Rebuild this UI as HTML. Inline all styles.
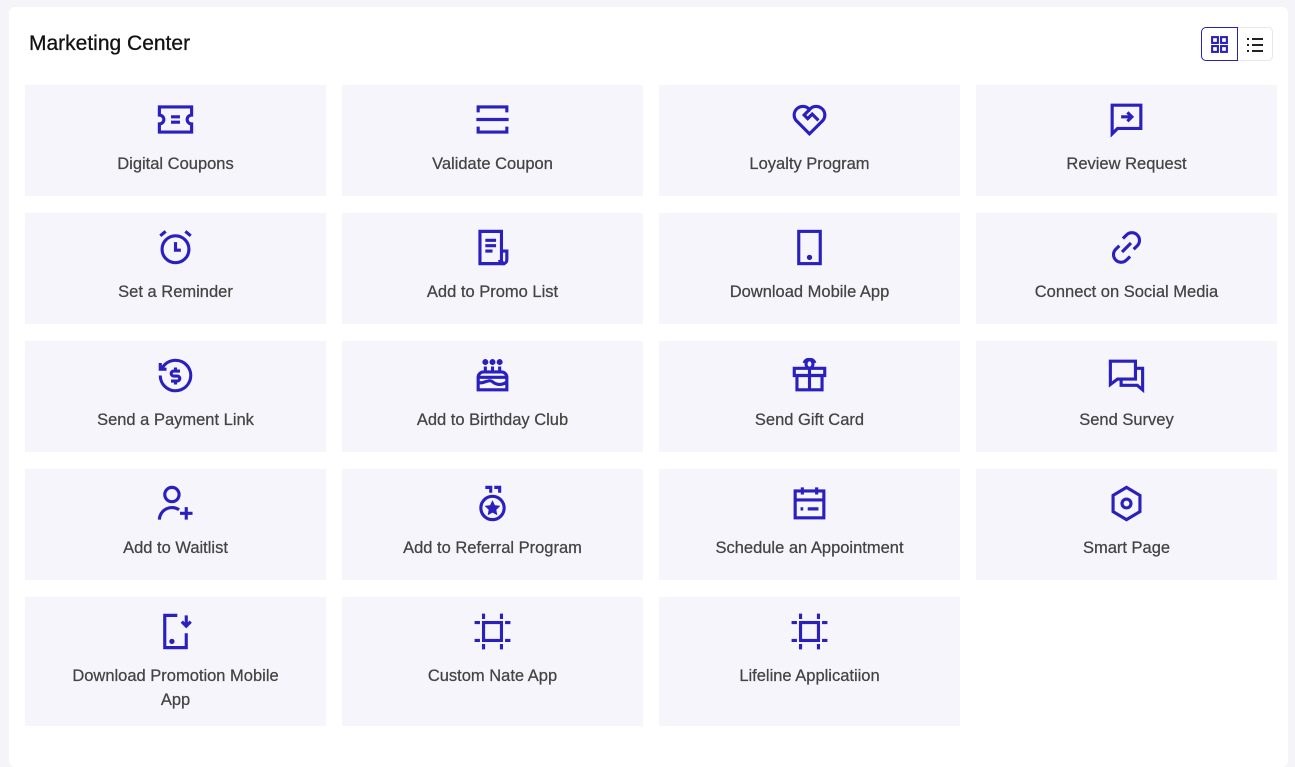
<!DOCTYPE html>
<html><head><meta charset="utf-8"><style>
*{margin:0;padding:0;box-sizing:border-box}
body{width:1295px;height:757px;background:#f4f4f9;font-family:"Liberation Sans",sans-serif;overflow:hidden}
.panel{position:absolute;left:9px;top:7px;width:1279px;height:760px;background:#fff;border-radius:6px}
h1{position:absolute;left:20px;top:25px;font-size:21px;font-weight:normal;color:#111;-webkit-text-stroke:0.3px #111}
.tog{position:absolute;left:1192px;top:20px;width:72px;height:34px;border:1px solid #e6e6ef;border-radius:5px}
.tog .a{position:absolute;left:-1px;top:-1px;width:37px;height:34px;border:1.5px solid #2a22b8;border-radius:5px 0 0 5px}
.card{position:absolute;width:301px;background:#f6f5fc;text-align:center;color:#444;font-size:16.5px;-webkit-text-stroke:0.25px #444}
.card svg{position:absolute;left:129px;top:13px;width:43px;height:43px}
.card span{position:absolute;left:38px;right:38px;top:67px;line-height:24px}
</style></head><body>
<div class="panel">
<h1>Marketing Center</h1>
<div class="tog"><div class="a"><svg style="position:absolute;left:8px;top:7px" width="19" height="19" viewBox="0 0 18 18" fill="none" stroke="#2a22b8" stroke-width="2"><rect x="2" y="2" width="5.5" height="5.5"/><rect x="10.5" y="2" width="5.5" height="5.5"/><rect x="2" y="10.5" width="5.5" height="5.5"/><rect x="10.5" y="10.5" width="5.5" height="5.5"/></svg></div>
<svg style="position:absolute;left:44px;top:8px" width="18" height="18" viewBox="0 0 18 18" stroke="#222" stroke-width="2"><path d="M6 3h11M6 9h11M6 15h11"/><path d="M1 3h2M1 9h2M1 15h2"/></svg></div>
</div>
<div id="g"></div>
<script>
var P='fill="none" stroke="#2a20bd" stroke-width="1.75" stroke-linejoin="miter"';
var I={
coupon:'<path d="M3 5h18v4.5a2.5 2.5 0 0 0 0 5V19H3v-4.5a2.5 2.5 0 0 0 0-5z"/><path d="M9.5 10.5h5M9.5 13.5h5"/>',
scan:'<path d="M4 8V5h16v3M4 16v3h16v-3M3 12h18"/>',
heart:'<path d="M12 20l-7.5-7.5a4.5 4.5 0 0 1 7.5-6 4.5 4.5 0 0 1 7.5 6z"/><path d="M12 6.5L9 9.5l2 2 2.5-2.5 3.5 3.5"/>',
review:'<path d="M4 4h16v13H7l-3 3z"/><path d="M9 10.5h6M12.5 8l2.5 2.5-2.5 2.5"/>',
alarm:'<circle cx="12" cy="13" r="7.5"/><path d="M12 9v4.5h3M3.5 5.5l3-2.5M20.5 5.5l-3-2.5"/>',
doc:'<path d="M5 3h12v16a2 2 0 0 0 2 2H5z"/><path d="M17 14h3v5a2 2 0 0 1-4 0M8 8h6M8 11h6M8 14h4"/>',
phone:'<rect x="6" y="3" width="12" height="18"/><circle cx="12" cy="17.5" r=".6" fill="#2a20bd"/>',
link:'<path d="M10 7l2-2a4 4 0 0 1 6 6l-2 2M14 17l-2 2a4 4 0 0 1-6-6l2-2M9.5 14.5l5-5"/>',
pay:'<path d="M4.5 8A8.5 8.5 0 1 1 3.5 12"/><path d="M3.5 5v3.5H7"/><path d="M14.5 9.5h-3.5a1.3 1.3 0 0 0 0 2.8h2a1.3 1.3 0 0 1 0 2.8H9.5M12 7.5v2M12 15v2"/>',
cake:'<path d="M4 13h16v7H4zM4 13a3 3 0 0 1 3-3h10a3 3 0 0 1 3 3M4 15.5c2.5 2 5.5-2 8 0s5.5 2 8 0M8 7v3M12 7v3M16 7v3"/><circle cx="8" cy="4.5" r=".8" fill="#2a20bd"/><circle cx="12" cy="4.5" r=".8" fill="#2a20bd"/><circle cx="16" cy="4.5" r=".8" fill="#2a20bd"/>',
gift:'<path d="M3.5 8h17v4h-17zM5 12h14v8H5zM12 8v12M12 8a2.5 2.5 0 1 0-3-3M12 8a2.5 2.5 0 1 1 3-3"/>',
chat:'<path d="M3 4h14v10H7l-4 3z"/><path d="M17 8h4v12l-3-2.5H9v-3.5"/>',
user:'<circle cx="10" cy="7" r="4"/><path d="M3 21a7 7 0 0 1 11-5.5M18 14v7M14.5 17.5h7"/>',
medal:'<circle cx="12" cy="14.5" r="6.5"/><path d="M8 3h3v3M13 3h3v3" /><path d="M12 11.3l1 2.1 2.3.3-1.7 1.6.4 2.3-2-1.1-2 1.1.4-2.3-1.7-1.6 2.3-.3z" fill="#2a20bd" stroke-width="1"/>',
cal:'<rect x="4" y="5" width="16" height="15"/><path d="M4 10h16M8 3v4M16 3v4M7 15h1.5M11 15h6"/>',
hex:'<path d="M12 3l7.5 4.5v9L12 21l-7.5-4.5v-9z"/><circle cx="12" cy="12" r="2.5"/>',
dl:'<path d="M13 3H6v18h12v-8"/><path d="M18 3v6M15.5 6.5l2.5 2.5 2.5-2.5"/><circle cx="10" cy="17.5" r=".6" fill="#2a20bd"/>',
frame:'<rect x="7" y="7" width="10" height="10"/><path d="M7 2v3M17 2v3M7 19v3M17 19v3M2 7h3M2 17h3M19 7h3M19 17h3"/>'
};
var D=[['coupon','Digital Coupons'],['scan','Validate Coupon'],['heart','Loyalty Program'],['review','Review Request'],
['alarm','Set a Reminder'],['doc','Add to Promo List'],['phone','Download Mobile App'],['link','Connect on Social Media'],
['pay','Send a Payment Link'],['cake','Add to Birthday Club'],['gift','Send Gift Card'],['chat','Send Survey'],
['user','Add to Waitlist'],['medal','Add to Referral Program'],['cal','Schedule an Appointment'],['hex','Smart Page'],
['dl','Download Promotion Mobile App'],['frame','Custom Nate App'],['frame','Lifeline Applicatiion']];
var h='';
D.forEach(function(d,i){var r=Math.floor(i/4),c=i%4;var x=25+c*317,y=85+r*128,hh=r==4?129:111;
h+='<div class="card" style="left:'+x+'px;top:'+y+'px;height:'+hh+'px"><svg viewBox="0 0 24 24" '+P+'>'+I[d[0]]+'</svg><span>'+d[1]+'</span></div>';});
document.getElementById('g').innerHTML=h;
</script>
</body></html>
